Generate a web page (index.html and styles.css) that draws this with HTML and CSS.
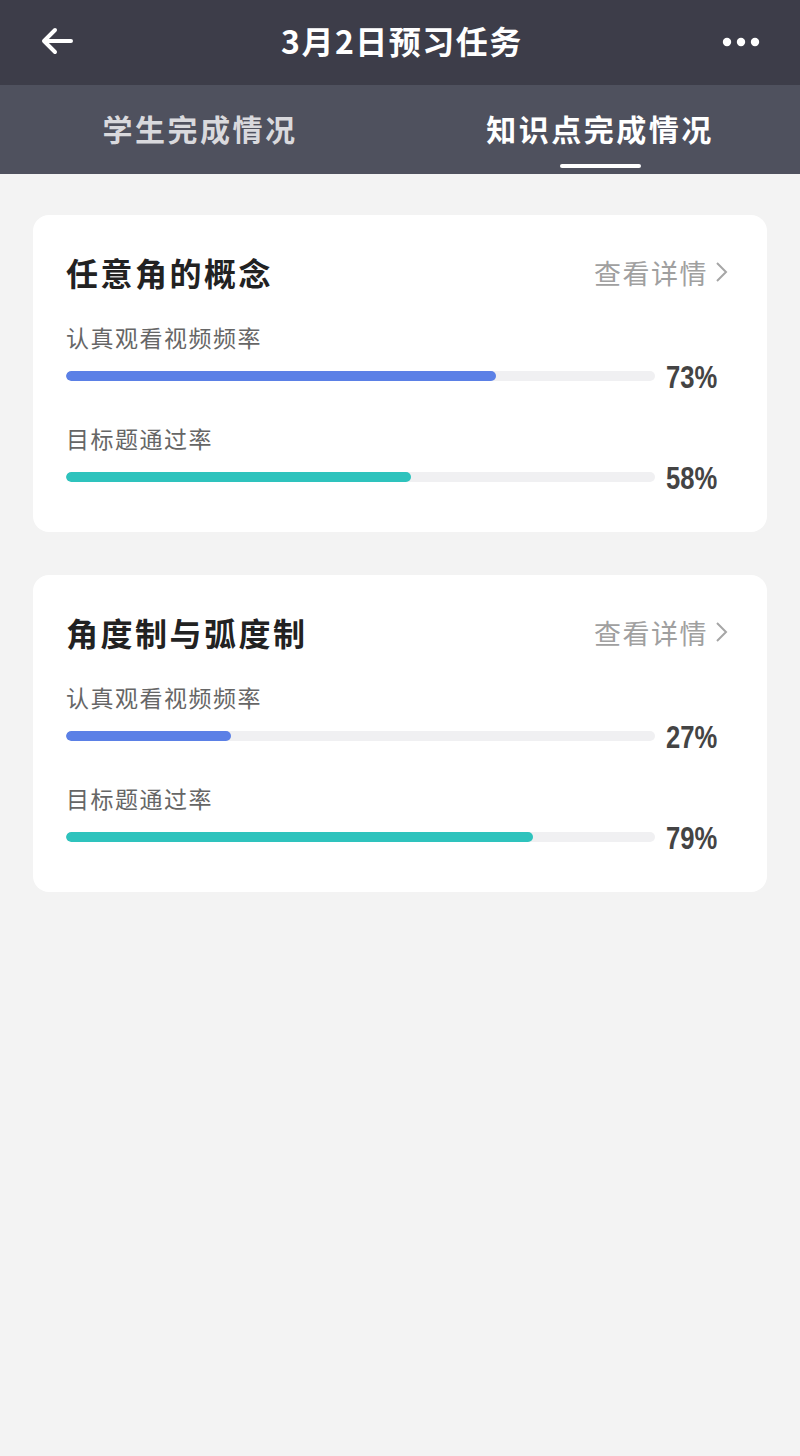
FILE: index.html
```html
<!DOCTYPE html>
<html lang="zh-CN">
<head>
    <meta charset="UTF-8">
    <meta name="viewport" content="width=device-width, initial-scale=1.0">
    <title>3月2日预习任务</title>
    <link rel="stylesheet" href="styles.css">
</head>
<body>
    <header class="topbar">
        <svg class="back" width="34" height="30" viewBox="0 0 34 30">
            <path d="M31 15H5M15 4L4 15L15 26" fill="none" stroke="#fff" stroke-width="4" stroke-linecap="round" stroke-linejoin="round"/>
        </svg>
        <h1 class="title">3月2日预习任务</h1>
        <svg class="more" width="40" height="10" viewBox="0 0 40 10">
            <circle cx="5" cy="5" r="4.2" fill="#fff"/>
            <circle cx="19" cy="5" r="4.2" fill="#fff"/>
            <circle cx="33" cy="5" r="4.2" fill="#fff"/>
        </svg>
    </header>

    <nav class="tabs">
        <div class="tab">
            <span class="tab-text">学生完成情况</span>
            <span class="tab-line"></span>
        </div>
        <div class="tab active">
            <span class="tab-text">知识点完成情况</span>
            <span class="tab-line"></span>
        </div>
    </nav>

    <main class="list">
        <section class="card">
            <div class="card-head">
                <h2 class="card-title">任意角的概念</h2>
                <a class="detail">查看详情
                    <svg width="14" height="22" viewBox="0 0 14 22"><path d="M3 2L12 11L3 20" fill="none" stroke="#a6a6a6" stroke-width="2"/></svg>
                </a>
            </div>
            <div class="metric">
                <div class="metric-label">认真观看视频频率</div>
                <div class="bar-row">
                    <div class="track"><div class="fill blue" style="width: 73%"></div></div>
                    <span class="pct">73%</span>
                </div>
            </div>
            <div class="metric">
                <div class="metric-label">目标题通过率</div>
                <div class="bar-row">
                    <div class="track"><div class="fill teal" style="width: 58.5%"></div></div>
                    <span class="pct">58%</span>
                </div>
            </div>
        </section>

        <section class="card">
            <div class="card-head">
                <h2 class="card-title">角度制与弧度制</h2>
                <a class="detail">查看详情
                    <svg width="14" height="22" viewBox="0 0 14 22"><path d="M3 2L12 11L3 20" fill="none" stroke="#a6a6a6" stroke-width="2"/></svg>
                </a>
            </div>
            <div class="metric">
                <div class="metric-label">认真观看视频频率</div>
                <div class="bar-row">
                    <div class="track"><div class="fill blue" style="width: 28%"></div></div>
                    <span class="pct">27%</span>
                </div>
            </div>
            <div class="metric">
                <div class="metric-label">目标题通过率</div>
                <div class="bar-row">
                    <div class="track"><div class="fill teal" style="width: 79.3%"></div></div>
                    <span class="pct">79%</span>
                </div>
            </div>
        </section>
    </main>
</body>
</html>
```

FILE: styles.css
```css
body {
    margin: 0;
    min-height: 1456px;
    background: #f3f3f3;
    font-family: "Noto Sans CJK SC", "Noto Sans", sans-serif;
}

.topbar {
    height: 85px;
    background: #3d3d49;
    display: flex;
    align-items: center;
    justify-content: space-between;
    padding: 0 38px 0 40px;
    box-sizing: border-box;
}

.back {
    margin-top: -4px;
}

.title {
    margin: -6px 0 0 8px;
    color: #fff;
    font-size: 32px;
    font-weight: 700;
    letter-spacing: 1.5px;
    line-height: 40px;
}

.more {
    margin-top: -2px;
}

.tabs {
    height: 89px;
    background: #4f515e;
    display: flex;
}

.tab {
    flex: 1;
    display: flex;
    flex-direction: column;
    align-items: center;
    padding-top: 23px;
}

.tab-text {
    color: #d9d9dd;
    font-size: 30px;
    font-weight: 700;
    letter-spacing: 2.5px;
    line-height: 40px;
}

.tab-line {
    width: 81px;
    height: 4px;
    margin-top: 16px;
    border-radius: 2px;
}

.tab.active .tab-text {
    color: #fff;
}

.tab.active .tab-line {
    background: #fff;
}

.list {
    padding: 41px 33px;
    display: flex;
    flex-direction: column;
    gap: 43px;
}

.card {
    background: #fff;
    border-radius: 16px;
    padding: 37px 39px 37px 33px;
}

.card-head {
    height: 40px;
    display: flex;
    align-items: center;
    justify-content: space-between;
    margin-bottom: 30px;
}

.card-title {
    margin: 0;
    color: #222;
    font-size: 32px;
    font-weight: 700;
    letter-spacing: 2.5px;
}

.detail {
    color: #a0a0a0;
    font-size: 27px;
    letter-spacing: 1.5px;
    display: flex;
    align-items: center;
    gap: 6px;
}

.metric + .metric {
    margin-top: 29px;
}

.metric-label {
    color: #666;
    font-size: 23px;
    letter-spacing: 1.5px;
    line-height: 30px;
}

.bar-row {
    height: 36px;
    margin-top: 6px;
    display: flex;
    align-items: center;
}

.track {
    flex: 1;
    height: 10px;
    border-radius: 5px;
    background: #f0f0f2;
    overflow: hidden;
}

.fill {
    height: 100%;
    border-radius: 5px;
}

.fill.blue {
    background: #5b80e6;
}

.fill.teal {
    background: #2ec3bd;
}

.pct {
    width: 62px;
    padding-left: 11px;
    color: #444;
    font-family: "Liberation Sans", Arial, sans-serif;
    font-weight: 700;
    font-size: 32px;
    line-height: 36px;
    margin-top: 2px;
    white-space: nowrap;
    transform: scaleX(0.8);
    transform-origin: 11px 50%;
}
```
